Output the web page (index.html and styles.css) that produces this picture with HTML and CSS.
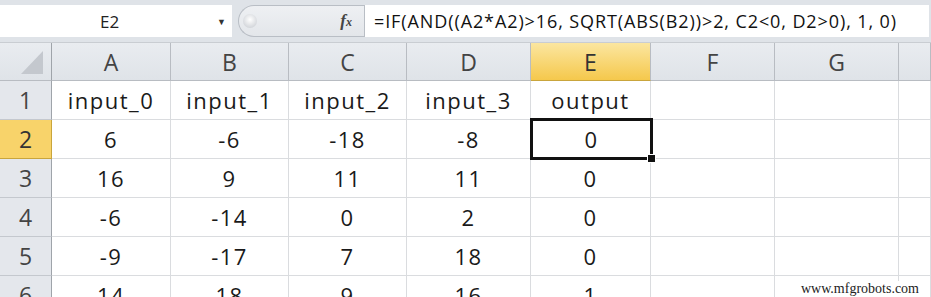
FILE: index.html
```html
<!DOCTYPE html>
<html lang="en">
<head>
  <meta charset="UTF-8">
  <title>Sheet</title>
  <link rel="stylesheet" href="styles.css">
</head>
<body>
  <div class="formula-area">
    <div class="name-box">
      <span class="cell-ref">E2</span>
      <span class="drop">&#9660;</span>
    </div>
    <div class="splitter">
      <span class="knob"></span>
      <span class="fx"><i>f</i><i class="x">x</i></span>
    </div>
    <div class="formula">=IF(AND((A2*A2)&gt;16, SQRT(ABS(B2))&gt;2, C2&lt;0, D2&gt;0), 1, 0)</div>
  </div>

  <div class="sheet">
    <div class="hdr corner"><span class="tri"></span></div>
    <div class="hdr col">A</div>
    <div class="hdr col">B</div>
    <div class="hdr col">C</div>
    <div class="hdr col">D</div>
    <div class="hdr col active">E</div>
    <div class="hdr col">F</div>
    <div class="hdr col">G</div>
    <div class="hdr col"></div>

    <div class="hdr row">1</div>
    <div class="cell">input_0</div><div class="cell">input_1</div><div class="cell">input_2</div><div class="cell">input_3</div><div class="cell">output</div><div class="cell"></div><div class="cell"></div><div class="cell"></div>

    <div class="hdr row active">2</div>
    <div class="cell">6</div><div class="cell">-6</div><div class="cell">-18</div><div class="cell">-8</div><div class="cell selected">0<span class="handle"></span></div><div class="cell"></div><div class="cell"></div><div class="cell"></div>

    <div class="hdr row">3</div>
    <div class="cell">16</div><div class="cell">9</div><div class="cell">11</div><div class="cell">11</div><div class="cell">0</div><div class="cell"></div><div class="cell"></div><div class="cell"></div>

    <div class="hdr row">4</div>
    <div class="cell">-6</div><div class="cell">-14</div><div class="cell">0</div><div class="cell">2</div><div class="cell">0</div><div class="cell"></div><div class="cell"></div><div class="cell"></div>

    <div class="hdr row">5</div>
    <div class="cell">-9</div><div class="cell">-17</div><div class="cell">7</div><div class="cell">18</div><div class="cell">0</div><div class="cell"></div><div class="cell"></div><div class="cell"></div>

    <div class="hdr row">6</div>
    <div class="cell">14</div><div class="cell">18</div><div class="cell">9</div><div class="cell">16</div><div class="cell">1</div><div class="cell"></div><div class="cell"></div><div class="cell"></div>
  </div>

  <div class="watermark">www.mfgrobots.com</div>
</body>
</html>
```

FILE: styles.css
```css
body {
  margin: 0;
  width: 931px;
  height: 297px;
  overflow: hidden;
  position: relative;
  background: #fff;
  font-family: "Open Sans", "Noto Sans", sans-serif;
  color: #222;
}

/* formula bar */
.formula-area {
  display: flex;
  height: 32px;
  padding: 5px 2px 5px 0;
  background: #dfe3e8;
  border-bottom: 1px solid #c9cdd2;
}

.name-box {
  width: 232px;
  background: #fff;
  display: flex;
  align-items: center;
}

.cell-ref {
  flex: 1;
  text-align: center;
  font-size: 17px;
  color: #222;
  padding-left: 2px;
}

.drop {
  font-size: 9px;
  color: #333;
  margin-right: 6px;
}

.splitter {
  width: 125px;
  margin-left: 6px;
  border: 1px solid #b9bec5;
  border-right: none;
  border-radius: 16px 0 0 16px;
  background: linear-gradient(#eef0f3, #e3e6ea);
  display: flex;
  align-items: center;
  justify-content: space-between;
}

.knob {
  width: 14px;
  height: 14px;
  margin-left: 4px;
  border-radius: 50%;
  background: radial-gradient(circle at 50% 40%, #fff, #c4c8ce);
}

.fx {
  font-family: "Liberation Serif", serif;
  font-weight: bold;
  font-size: 17px;
  color: #444;
  margin-right: 12px;
}

.fx .x {
  font-size: 12px;
}

.formula {
  flex: 1;
  background: #fff;
  border-left: 1px solid #b9bec5;
  font-size: 18px;
  letter-spacing: 0.9px;
  line-height: 32px;
  padding-left: 9px;
  color: #111;
  white-space: nowrap;
}

/* sheet grid */
.sheet {
  display: grid;
  grid-template-columns: 52px 119px 118px 118px 124px 120px 124px 124px 1fr;
  grid-template-rows: 38px repeat(6, 39px);
}

.hdr {
  background: linear-gradient(#e9ecf0, #dfe3e8);
  color: #444;
  font-size: 23px;
  display: flex;
  align-items: center;
  justify-content: center;
  border-right: 1px solid #b8bcc2;
  border-bottom: 1px solid #b8bcc2;
}

.hdr.row {
  background: #e4e7ec;
  border-right: 1px solid #9fa4aa;
  border-bottom: 1px solid #c4c8ce;
}

.hdr.active {
  background: linear-gradient(#fbe6a0, #f5c84c);
  color: #333;
  border-bottom-color: #c9a53c;
}

.hdr.row.active {
  background: #f8d36a;
  border-right-color: #c9a53c;
}

.corner {
  position: relative;
  border-right-color: #9fa4aa;
}

.tri {
  position: absolute;
  right: 8px;
  bottom: 6px;
  width: 0;
  height: 0;
  border-left: 22px solid transparent;
  border-bottom: 23px solid #c4c8ce;
}

.cell {
  font-size: 22px;
  letter-spacing: 1.5px;
  color: #1a1a1a;
  display: flex;
  align-items: center;
  justify-content: center;
  border-right: 1px solid #dadcdf;
  border-bottom: 1px solid #dadcdf;
}

.selected {
  position: relative;
  border: 3px solid #111;
  margin: -2px -2px -1px -1px;
}

.handle {
  position: absolute;
  right: -6px;
  bottom: -6px;
  width: 7px;
  height: 7px;
  background: #111;
  border: 1px solid #fff;
}

.watermark {
  position: absolute;
  right: 10px;
  bottom: 0;
  font-family: "Liberation Serif", serif;
  font-size: 14px;
  color: #222;
  background: #fff;
  padding: 0 2px;
}
```
